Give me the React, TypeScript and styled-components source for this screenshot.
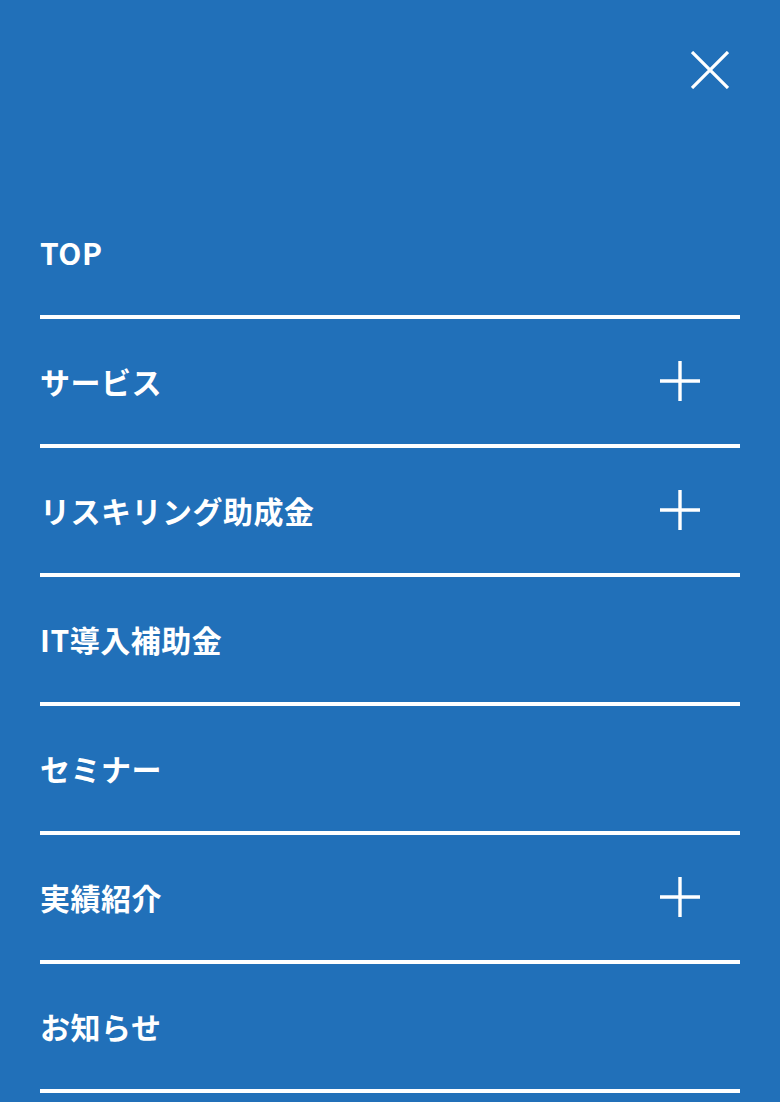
import { FunctionComponent } from "react";
import styled, { createGlobalStyle } from "styled-components";

const GlobalStyle = createGlobalStyle`
    html, body {
        margin: 0;
        padding: 0;
        background: #2170b9;
    }

    body {
        font-family: "Noto Sans CJK JP", "Noto Sans", sans-serif;
        color: #fff;
    }
`;

const StyledMenu = styled.div`
    width: 780px;
    min-height: 1102px;
    background: #2170b9;
    box-sizing: border-box;
`;

const Header = styled.header`
    display: flex;
    justify-content: flex-end;
    height: 190px;
    padding: 51px 51px 0 0;
    box-sizing: border-box;
`;

const CloseButton = styled.button`
    width: 38px;
    height: 38px;
    padding: 0;
    border: none;
    background: transparent;
    cursor: pointer;

    svg {
        display: block;
    }
`;

const NavList = styled.ul`
    list-style: none;
    margin: 0;
    padding: 0 40px;
`;

const NavItem = styled.li`
    display: flex;
    align-items: center;
    justify-content: space-between;
    height: 125px;
    padding-right: 40px;
    border-bottom: 4px solid #fff;
`;

const NavLabel = styled.a`
    font-size: 30px;
    font-weight: 700;
    line-height: 45px;
    color: #fff;
    text-decoration: none;
    letter-spacing: 0.5px;
`;

const Toggle = styled.span`
    display: block;
    width: 40px;
    height: 40px;
    margin-bottom: 2px;

    svg {
        display: block;
    }
`;

const items: { label: string; hasChildren: boolean }[] = [
    { label: "TOP", hasChildren: false },
    { label: "サービス", hasChildren: true },
    { label: "リスキリング助成金", hasChildren: true },
    { label: "IT導入補助金", hasChildren: false },
    { label: "セミナー", hasChildren: false },
    { label: "実績紹介", hasChildren: true },
    { label: "お知らせ", hasChildren: false },
];

const App: FunctionComponent = () => {
    return (
        <StyledMenu>
            <GlobalStyle />
            <Header>
                <CloseButton aria-label="close">
                    <svg width="38" height="38" viewBox="0 0 38 38">
                        <path d="M1 1 L37 37 M37 1 L1 37" stroke="#fff" strokeWidth="3.2" />
                    </svg>
                </CloseButton>
            </Header>
            <nav>
                <NavList>
                    {items.map((item) => (
                        <NavItem key={item.label}>
                            <NavLabel href="#">{item.label}</NavLabel>
                            {item.hasChildren && (
                                <Toggle>
                                    <svg width="40" height="40" viewBox="0 0 40 40">
                                        <path d="M20 0 V40 M0 20 H40" stroke="#fff" strokeWidth="3.4" />
                                    </svg>
                                </Toggle>
                            )}
                        </NavItem>
                    ))}
                </NavList>
            </nav>
        </StyledMenu>
    );
};

export default App;
